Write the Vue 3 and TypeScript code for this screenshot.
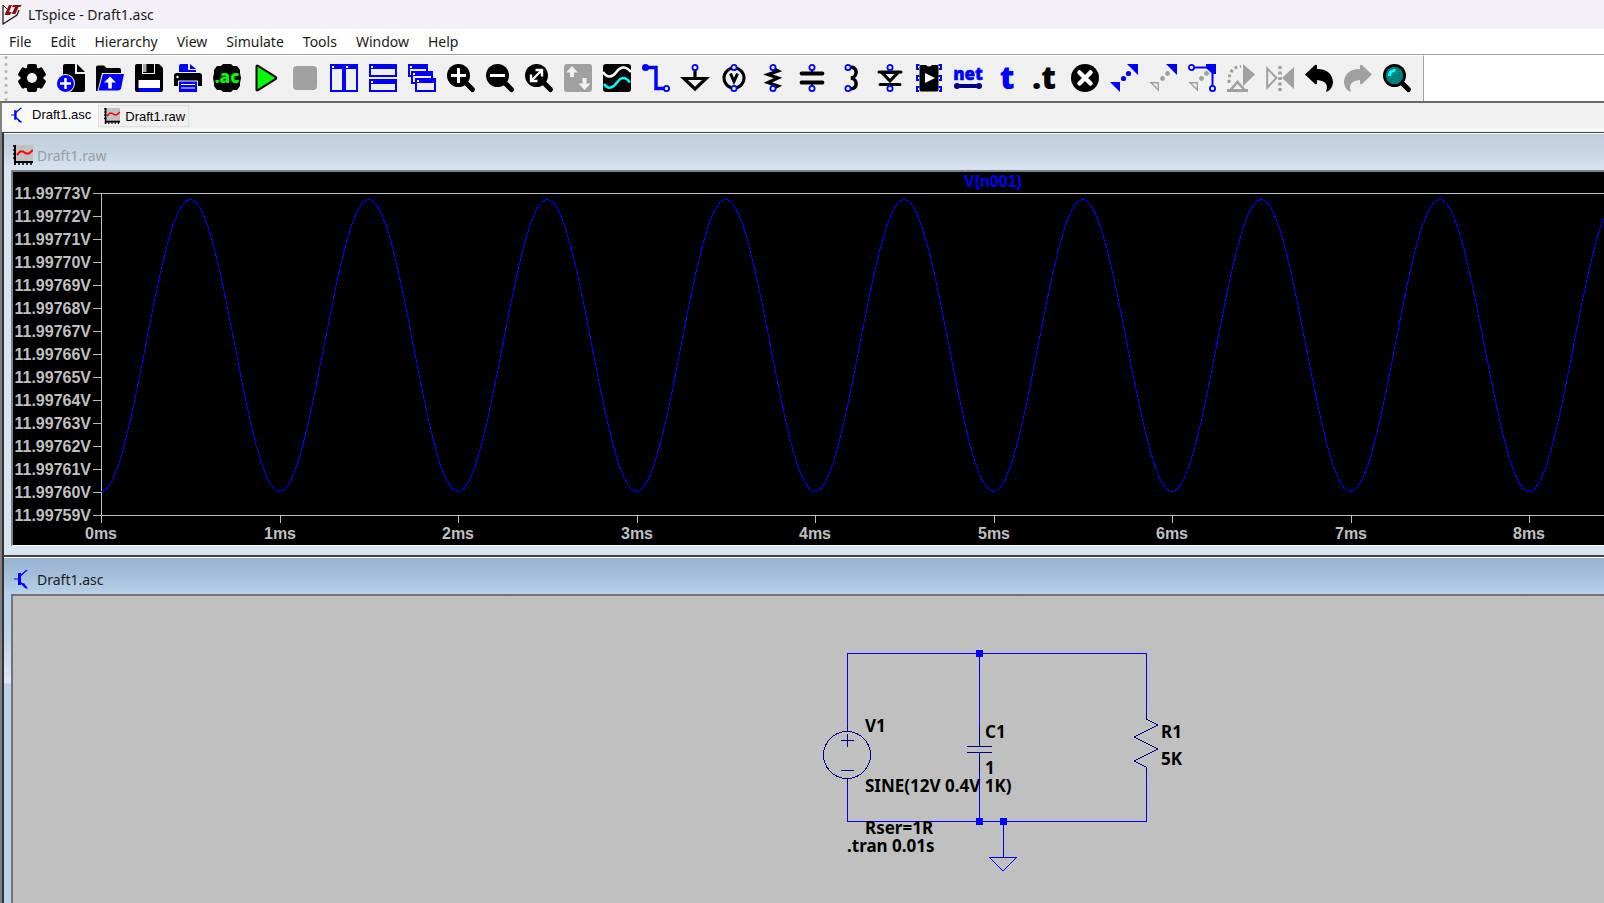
<script setup lang="ts">
interface Tool {
  label: string
  art: string
  disabled?: boolean
}

const magnifier =
  '<path d="M18 18L25.500 25.500" stroke="#000" stroke-width="5" stroke-linecap="round"/><circle cx="11.500" cy="11.500" r="11.500"/>'
const ring = (x: number, y: number): string =>
  `<circle cx="${x}" cy="${y}" r="2.600" fill="#f0f0f0" stroke="#00f" stroke-width="1.800"/>`
const pane = (x: number, y: number, w: number, h: number): string =>
  `<rect x="${x + 1}" y="${y + 1}" width="${w - 2}" height="${h - 2}" fill="#f0f0f0" stroke="#00f" stroke-width="2"/><path d="M${x} ${y}h${w}v5h${-w}z" fill="#00f"/><path d="M${x + 2} ${y + 2}h2v2h-2z" fill="#fff"/>`

const tools: Tool[] = [
  { label: 'Settings', art: '<circle cx="14" cy="14" r="11.500"/><rect x="9" width="10" height="28" rx="2"/><rect x="9" width="10" height="28" rx="2" transform="rotate(60 14 14)"/><rect x="9" width="10" height="28" rx="2" transform="rotate(120 14 14)"/><circle cx="14" cy="14" r="5" fill="#f0f0f0"/>' },
  { label: 'New schematic', art: '<path d="M8 0H18V10H28V26Q28 28 26 28H8Q6 28 6 26V2Q6 0 8 0z"/><path d="M20 0L28 8H20z"/><circle cx="8.500" cy="19.500" r="9.500" fill="#f0f0f0"/><circle cx="8.500" cy="19.500" r="8.500" fill="#00f"/><path d="M8.500 14v11M3 19.500h11" stroke="#fff" stroke-width="2.500"/>' },
  { label: 'Open', art: '<path d="M0 27V3Q0 1.500 2 1.500H8L10.500 4H23Q25 4 25 6V9H6L1.500 27z"/><path d="M7 10H28L25 24.500Q24.500 26.500 22 26.500H2.500z" fill="#00f"/><path d="M14 12.500L20 18.500H15.800V24.500H12.200V18.500H8z" fill="#fff"/>' },
  { label: 'Save', art: '<path d="M2 0H24L28 4V26Q28 28 26 28H2Q0 28 0 26V2Q0 0 2 0z"/><path d="M7 0h1v9h11v-9h1v10h-13z" fill="#f0f0f0"/><path d="M8 0h3.500v8h-3.500z" fill="#aaa"/><path d="M3.500 16h21.500v8h-21.500z" fill="#fff"/><path d="M3.500 24h21.500v4h-21.500z" fill="#00f"/>' },
  { label: 'Print', art: '<path d="M5 8V2Q5 0 7 0H14V6H22V8z" fill="#00f"/><path d="M16 0L22 5H16z" fill="#00f"/><path d="M2.500 9H25.500Q28 9 28 11.500V22H0V11.500Q0 9 2.500 9z"/><circle cx="3.500" cy="13" r="1.200" fill="#fff"/><path d="M4 16.500h20v11.500h-20z" fill="#f0f0f0"/><path d="M5 17.500h18v10.500h-18z" fill="#00f"/><path d="M7 20.500h14M7 24h14" stroke="#fff" stroke-width="1.200"/>' },
  { label: 'AC analysis', art: '<path d="M10 0H18L20 2H24L27 6V9L28 14L27 19V22L24 26H20L18 28H10L8 26H4L1 22V19L0 14L1 9V6L4 2H8z"/><text x="14" y="19" text-anchor="middle" font-size="17" fill="#0f0">.ac</text>' },
  { label: 'Run', art: '<path d="M4.500 2.500Q4.500 1 6 1.800L23.500 12.800Q25 14 23.500 15.200L6 26.200Q4.500 27 4.500 25.500z" fill="#0f0" stroke="#000" stroke-width="2"/>' },
  { label: 'Halt', disabled: true, art: '<rect x="2" y="2" width="24" height="24" rx="4" fill="#a0a0a0"/>' },
  { label: 'Tile vertically', art: pane(0, 0, 14, 28) + pane(14, 0, 14, 28) },
  { label: 'Tile horizontally', art: pane(0, 0, 28, 13) + pane(0, 15, 28, 13) },
  { label: 'Cascade', art: pane(0, 0, 20, 13) + pane(3, 7, 22, 13) + pane(7, 14, 21, 14) },
  { label: 'Zoom in', art: magnifier + '<path d="M11.500 4v15M4 11.500h15" stroke="#fff" stroke-width="3"/>' },
  { label: 'Zoom out', art: magnifier + '<path d="M4 11.500h15" stroke="#fff" stroke-width="3"/>' },
  { label: 'Zoom to fit', art: magnifier + '<path d="M7 16L16 7M10.500 6H17V12.500M6 10.500V17H12.500" fill="none" stroke="#fff" stroke-width="2.400"/>' },
  { label: 'Autorange', disabled: true, art: '<rect width="28" height="28" rx="3" fill="#a0a0a0"/><path d="M8 2L14 8.500H10V13H6V8.500H2zM20.500 26L14.500 19.500H18.500V14H22.500V19.500H26.500z" fill="#f0f0f0"/>' },
  { label: 'Plot', art: '<rect width="28" height="28" rx="3"/><path d="M0 8C4 14 9 14 13 8.500S22 1 28 8" fill="none" stroke="#fff" stroke-width="2.500"/><path d="M1 20C5 26 10 24 14 18.500S22 12 27 18.500" fill="none" stroke="#0ff" stroke-width="2.500"/>' },
  { label: 'Wire', art: '<path d="M3 3.500H14V24.500H22" fill="none" stroke="#00f" stroke-width="3.500"/><circle cx="3.500" cy="3.500" r="3.500" fill="#00f"/>' + ring(24.5, 24.5) },
  { label: 'Ground', art: '<path d="M14 5V14M3 14.500H25L14 25z" fill="none" stroke="#000" stroke-width="3.200"/>' + ring(14, 3.5) },
  { label: 'Voltage source', art: '<circle cx="14" cy="14" r="10" fill="none" stroke="#000" stroke-width="3"/><path d="M10.500 9.500L14 17.500L17.500 9.500" fill="none" stroke="#000" stroke-width="3"/>' + ring(14, 3.5) + ring(14, 24.5) },
  { label: 'Resistor', art: '<path d="M15 5L19 7L9 10.500L19 14L9 18.500L19 22L15 24" fill="none" stroke="#000" stroke-width="3.200"/>' + ring(14, 3.5) + ring(14, 24.5) },
  { label: 'Capacitor', art: '<path d="M14 4V9M14 19V24" stroke="#000" stroke-width="2"/><path d="M3.500 9.500H24.500M3.500 18.500H24.500" stroke="#000" stroke-width="3.800" stroke-linecap="round"/>' + ring(14, 3.5) + ring(14, 24.5) },
  { label: 'Inductor', art: '<path d="M13 3.500C21 2 21 13 14 14C21 15 21 26 13 24.500" fill="none" stroke="#000" stroke-width="3.500"/>' + ring(11, 3.5) + ring(11, 24.5) },
  { label: 'Diode', art: '<path d="M6 8.500H22L14 17z" fill="none" stroke="#000" stroke-width="3.200"/><path d="M3 8h22M4 20.500h20" stroke="#000" stroke-width="3" stroke-linecap="round"/>' + ring(14, 3.5) + ring(14, 24.5) },
  { label: 'Component', art: '<path d="M6 1H11Q14 4 17 1H22Q23.500 1 23.500 3V25Q23.500 27.500 22 27.500H6Q4.500 27.500 4.500 25V3Q4.500 1 6 1z"/><path d="M4.500 1H2V5H4M4.500 12H2V16H4M4.500 23H2V27H4M23.500 1H26V5H24M23.500 12H26V16H24M23.500 23H26V27H24" fill="none" stroke="#00f" stroke-width="2"/><path d="M10 9L20 14L10 19z" fill="#fff"/>' },
  { label: 'Net name', art: '<text x="14" y="16" text-anchor="middle" font-size="17" fill="#00f" stroke="#00f" stroke-width="0.500">net</text><path d="M3 22H25" stroke="#000080" stroke-width="4"/><circle cx="3" cy="22" r="3" fill="#000080"/><circle cx="25" cy="22" r="3" fill="#000080"/>' },
  { label: 'Text', art: '<text x="14" y="25" text-anchor="middle" font-size="32" fill="#00f">t</text>' },
  { label: 'SPICE directive', art: '<text x="12" y="25" text-anchor="middle" font-size="32">.t</text>' },
  { label: 'Delete', art: '<circle cx="14" cy="14" r="14"/><path d="M8.500 8.500L19.500 19.500M19.500 8.500L8.500 19.500" stroke="#fff" stroke-width="4.500" stroke-linecap="round"/>' },
  { label: 'Move', art: '<path d="M17 0H28V11zM0 18H10V28z" fill="#00f"/><circle cx="13.500" cy="14.500" r="2.600" fill="#00f"/><circle cx="18.500" cy="9.500" r="2.600" fill="#00f"/>' },
  { label: 'Copy', art: '<path d="M17 0H28V11z" fill="#00f"/><path d="M2 18.700H9.300V26z" fill="none" stroke="#a0a0a0" stroke-width="1.400"/><circle cx="13.500" cy="14.500" r="2.400" fill="#a0a0a0"/><circle cx="18.500" cy="9.500" r="2.400" fill="#a0a0a0"/>' },
  { label: 'Drag', art: '<path d="M6 3.500H20M24.500 8V22" stroke="#00f" stroke-width="2"/><path d="M18 0H28V10H24.500L18 4z" fill="#00f"/><path d="M2 18.700H9.300V26z" fill="none" stroke="#a0a0a0" stroke-width="1.400"/><circle cx="13.500" cy="14.500" r="2.400" fill="#a0a0a0"/><circle cx="18.500" cy="9.500" r="2.400" fill="#a0a0a0"/>' + ring(3.5, 3.5) + ring(24.5, 24.5) },
  { label: 'Rotate', disabled: true, art: '<path d="M16 0L28 10.500L16 22z" fill="#a0a0a0"/><path d="M2 19V17C2 8 6 3 14 2.500" fill="none" stroke="#a0a0a0" stroke-width="3" stroke-dasharray="3 2.500"/><path d="M3 26.500L10.500 18L18 26.500" fill="none" stroke="#a0a0a0" stroke-width="2.500"/><path d="M0 26.500H21" stroke="#a0a0a0" stroke-width="3"/>' },
  { label: 'Mirror', disabled: true, art: '<path d="M1.200 4.500V23.500L10.500 14z" fill="none" stroke="#a0a0a0" stroke-width="2"/><path d="M28 3V25L16 14z" fill="#a0a0a0"/><path d="M14 2V27" stroke="#a0a0a0" stroke-width="3.500" stroke-dasharray="3 2.500"/>' },
  { label: 'Undo', art: '<path d="M0 10.500L10 1Q12 0 12 2V5C23 5 28 11 28 19Q27 26 21 28Q25 17 12 16V19Q12 21 10 20z"/>' },
  { label: 'Redo', disabled: true, art: '<path d="M28 10.500L18 1Q16 0 16 2V5C5 5 0 11 0 19Q1 26 7 28Q3 17 16 16V19Q16 21 18 20z" fill="#a0a0a0"/>' },
  { label: 'Search', art: magnifier + '<circle cx="11.500" cy="11.500" r="8.700" fill="#008080"/><path d="M5 12C5 7 8 5 13 5L12 8Q8 8 8 12z" fill="#0ff"/>' },
]

const menus: string[] = ['File', 'Edit', 'Hierarchy', 'View', 'Simulate', 'Tools', 'Window', 'Help']

// Plot coordinates are relative to the black trace area.
const axis = { x: 88, top: 21, bottom: 343, msWidth: 178.5, step: 23 }
const yTicks = Array.from({ length: 15 }, (_, i) => ({
  y: axis.top + i * axis.step,
  label: `${(11.99773 - i * 0.00001).toFixed(5)}V`,
}))
const xTicks = Array.from({ length: 9 }, (_, i) => ({
  x: Math.round(axis.x + i * axis.msWidth),
  label: `${i}ms`,
}))
const trace = Array.from({ length: 301 }, (_, i) => {
  const t = i / 30
  const x = axis.x + t * axis.msWidth
  const y = 173.5 + 146.5 * Math.cos(2 * Math.PI * t)
  return `${x.toFixed(1)},${y.toFixed(1)}`
}).join(' ')
</script>

<template>
  <div class="app">
    <header class="titlebar">
      <svg width="20" height="20" viewBox="0 0 20 20" aria-hidden="true">
        <path d="M1 0V19L15 10L17 5" fill="none" stroke="#111" stroke-width="1.200" />
        <path d="M1 0L5 4" stroke="#111" />
        <path d="M7 0H10L7 7H9.500L8 10H2.500zM11 0H20L18 2H16.500L13.500 9H9.500L13 2H10z" fill="#8b1010" />
      </svg>
      <span>LTspice - Draft1.asc</span>
    </header>

    <nav class="menubar">
      <button v-for="m in menus" :key="m" type="button">{{ m }}</button>
    </nav>

    <div class="toolrow">
      <div class="toolbar" role="toolbar" aria-label="Main">
        <button v-for="t in tools" :key="t.label" type="button" :aria-label="t.label" :disabled="t.disabled">
          <svg width="28" height="28" viewBox="0 0 28 28" v-html="t.art" />
        </button>
      </div>
    </div>

    <div class="workspace">
      <div class="tabs" role="tablist">
        <button type="button" class="tab active" role="tab" aria-selected="true">
          <svg width="16" height="16" viewBox="0 0 20 20" aria-hidden="true">
            <path d="M0 10H5M5 8L13 1M5 12L13 19" stroke="#00f" stroke-width="1.500" />
            <path d="M4 4H7V16H4zM8 14L14 20L9 18z" fill="#00f" />
          </svg>
          Draft1.asc
        </button>
        <button type="button" class="tab" role="tab" aria-selected="false">
          <svg width="16" height="16" viewBox="0 0 20 20" aria-hidden="true">
            <path d="M3 0H20V17H3z" fill="#c0c0c0" />
            <path d="M2 0V20M1 17H20" stroke="#000" stroke-width="2" />
            <path d="M0 1H3M0 5H3M0 9H3M0 13H3M6 17V20M10 17V20M14 17V20M18 17V20" stroke="#000" stroke-width="1.500" />
            <path d="M4 10L7 6.500H10L13 8.500H16L20 5" fill="none" stroke="#f00" stroke-width="2" />
          </svg>
          Draft1.raw
        </button>
      </div>

      <section class="window plot-window">
        <h2 class="caption">
          <svg width="20" height="20" viewBox="0 0 20 20" aria-hidden="true">
            <path d="M3 0H20V17H3z" fill="#c0c0c0" />
            <path d="M2 0V20M1 17H20" stroke="#000" stroke-width="2" />
            <path d="M0 1H3M0 5H3M0 9H3M0 13H3M6 17V20M10 17V20M14 17V20M18 17V20" stroke="#000" stroke-width="1.500" />
            <path d="M4 10L7 6.500H10L13 8.500H16L20 5" fill="none" stroke="#f00" stroke-width="2" />
          </svg>
          Draft1.raw
        </h2>
        <div class="pane plot">
          <svg width="1920" height="373" viewBox="0 0 1920 373" role="img" aria-label="V(n001) waveform">
            <g class="axes">
              <rect :x="axis.x" :y="axis.top" :width="axis.msWidth * 10" :height="axis.bottom - axis.top" />
              <path v-for="t in yTicks" :key="t.label" :d="`M${axis.x - 8} ${t.y}H${axis.x}`" />
              <path v-for="t in xTicks" :key="t.label" :d="`M${t.x} ${axis.bottom}v8`" />
            </g>
            <text v-for="t in yTicks" :key="t.label" class="y-label" :x="axis.x - 10" :y="t.y + 6">{{ t.label }}</text>
            <text v-for="t in xTicks" :key="t.label" class="x-label" :x="t.x" y="367">{{ t.label }}</text>
            <text class="x-label trace-name" x="980" y="15">V(n001)</text>
            <polyline class="trace" :points="trace" />
          </svg>
        </div>
      </section>

      <section class="window schematic-window">
        <h2 class="caption">
          <svg width="20" height="20" viewBox="0 0 20 20" aria-hidden="true">
            <path d="M1 10H6M6 8L14 1M6 12L14 19" stroke="#00f" stroke-width="1.200" />
            <path d="M5 4H8V16H5zM8 15L11 14L13 17L15 20L12 19z" fill="#00f" />
          </svg>
          Draft1.asc
        </h2>
        <div class="pane schematic">
          <svg width="1300" height="300" viewBox="0 0 1300 300" role="img" aria-label="Schematic">
            <g class="wire">
              <path d="M834 130V57H1133V118M834 185V225H1133V178M966 57V130M966 178V225M990 225V261" />
              <path d="M976 261H1004L990 275z" />
            </g>
            <g class="part">
              <circle cx="834" cy="159" r="23.500" />
              <path d="M834 130V135M834 183V188M828 144H841M834 138V151M828 174H841" />
              <path d="M966 130V150M954 150H979M954 156H979M966 156V178" />
              <path d="M1133 118V123L1145 129L1121 141L1145 153L1121 165L1133 171V178" />
            </g>
            <g class="joint">
              <rect x="963" y="54" width="7" height="7" />
              <rect x="963" y="222" width="7" height="7" />
              <rect x="987" y="222" width="7" height="7" />
            </g>
            <g class="note">
              <text x="852" y="136">V1</text>
              <text x="972" y="142">C1</text>
              <text x="972" y="178">1</text>
              <text x="852" y="196">SINE(12V 0.4V 1K)</text>
              <text x="852" y="238">Rser=1R</text>
              <text x="834" y="256">.tran 0.01s</text>
              <text x="1148" y="142">R1</text>
              <text x="1148" y="169">5K</text>
            </g>
          </svg>
        </div>
      </section>
    </div>
  </div>
</template>

<style>
body {
  margin: 0;
  overflow: hidden;
}
</style>

<style scoped>
.app {
  display: flex;
  flex-direction: column;
  height: 100vh;
  overflow: hidden;
  background: #f0f0f0;
  color: #1a1a1a;
  font-family: "Noto Sans", "Open Sans", sans-serif;
  font-size: 14px;
}
button {
  border: 0;
  margin: 0;
  padding: 0;
  background: none;
  color: inherit;
  font: inherit;
}
.titlebar {
  display: flex;
  align-items: center;
  gap: 6px;
  height: 29px;
  padding-left: 2px;
  background: #f3f0f8;
}
.menubar {
  display: flex;
  gap: 19px;
  height: 25px;
  padding-left: 9px;
  background: #fff;
}
.toolrow {
  display: flex;
  border-top: 1px solid #a0a0a0;
  background: #fff;
}
.toolbar {
  display: flex;
  align-items: center;
  gap: 11px;
  flex: none;
  height: 46px;
  padding: 0 12px 1px 18px;
  border-top: 1px solid #fff;
  border-right: 1px solid #a0a0a0;
  box-sizing: border-box;
  background:
    radial-gradient(circle, #b4b4b4 1px, transparent 2px) 4px 5px / 4px 7px repeat-y,
    #f0f0f0;
}
.toolbar button,
.toolbar svg {
  display: block;
  width: 28px;
  height: 28px;
  overflow: visible;
}
.toolbar :deep(text) {
  font-family: "Noto Sans", sans-serif;
  font-weight: 900;
}
.workspace {
  display: flex;
  flex: 1;
  flex-direction: column;
  min-height: 0;
  border-top: 2px solid #696969;
  border-left: 2px solid #808080;
}
.tabs {
  display: flex;
  align-items: flex-start;
  height: 25px;
  border-bottom: 3px solid #f8f8f8;
  font-family: "Liberation Sans", Arial, sans-serif;
  font-size: 13px;
}
.tab {
  display: flex;
  align-items: center;
  gap: 5px;
  height: 22px;
  margin-top: 2px;
  padding: 0 3px 0 5px;
  border: 1px solid #e0e0e0;
  color: #000;
}
.tab.active {
  height: 25px;
  margin-top: 0;
  padding: 0 7px 2px 9px;
  border: 0;
  background: #f9f9f9;
}
.window {
  display: flex;
  flex-direction: column;
  padding: 0 0 9px 7px;
  border-top: 2px solid #404448;
  border-left: 2px solid #333;
  overflow: hidden;
}
.plot-window {
  margin-top: 1px;
  border-top-width: 1px;
  background: #d7e4f2;
}
.schematic-window {
  flex: 1;
  min-height: 0;
  padding-bottom: 0;
  background: linear-gradient(#b9d1ea 70px, #dce8f4 126px, #b9d1ea 127px);
}
.caption {
  display: flex;
  align-items: center;
  gap: 4px;
  flex: none;
  height: 37px;
  margin: 0 0 0 -7px;
  padding: 6px 0 0 9px;
  border-top: 1px solid #fff;
  box-sizing: border-box;
  font-size: 14px;
  font-weight: 400;
}
.plot-window .caption {
  background: linear-gradient(#bfcddb, #c8d5e2 50%, #d7e4f2);
  color: #9c9fa2;
}
.schematic-window .caption {
  background: linear-gradient(#99b4d1, #a5bfdb 50%, #b9d1ea);
}
.pane {
  overflow: hidden;
  border-top: 2px solid #808080;
  border-left: 2px solid #808080;
}
.pane svg {
  display: block;
}
.plot {
  border-bottom: 1px solid #fff;
  background: #000;
}
.axes {
  fill: none;
  stroke: #c0c0c0;
  shape-rendering: crispEdges;
}
.y-label,
.x-label {
  fill: #c0c0c0;
  font: bold 16px "Liberation Sans", Arial, sans-serif;
  text-anchor: end;
}
.x-label {
  text-anchor: middle;
}
.trace-name {
  fill: #00f;
}
.trace {
  fill: none;
  stroke: #00f;
  shape-rendering: crispEdges;
}
.schematic {
  flex: 1;
  border-color: #737373;
  background: #c0c0c0;
}
.wire,
.part {
  fill: none;
  stroke: #00f;
  shape-rendering: crispEdges;
}
.part {
  stroke: #000080;
}
.joint {
  fill: #00f;
}
.note {
  font: 700 17px "Noto Sans", sans-serif;
}
</style>
